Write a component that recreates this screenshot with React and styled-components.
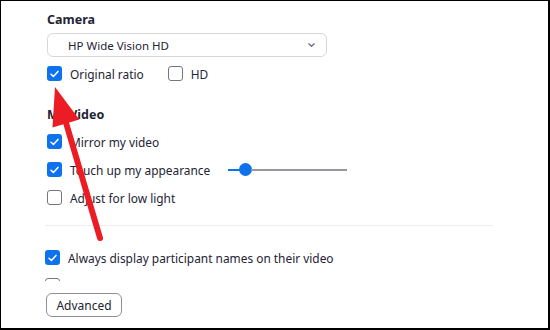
import React from 'react'
import styled, { createGlobalStyle } from 'styled-components'

const Global = createGlobalStyle`
  html, body { margin: 0; padding: 0; background: #fff; }
  body { font-family: "Noto Sans", "Open Sans", sans-serif; }
`

const Frame = styled.div`
  position: relative;
  box-sizing: border-box;
  width: 550px;
  height: 330px;
  border-style: solid;
  border-color: #000;
  border-width: 1px 2px 2px 1px;
  background: #fff;
  overflow: hidden;
`

const Scroll = styled.div`
  height: 280px;
  overflow: hidden;
  padding: 10px 0 0 46px;
  box-sizing: border-box;
`

const Heading = styled.div`
  font-size: 12.5px;
  line-height: 18px;
  font-weight: 700;
  color: #232333;
  margin-top: ${p => p.$top || 0}px;
`

const Select = styled.div`
  box-sizing: border-box;
  width: 280px;
  height: 24px;
  margin-top: 4px;
  border: 1px solid #d6d6dc;
  border-radius: 6px;
  display: flex;
  align-items: center;
  justify-content: space-between;
  padding: 0 10px 0 20px;
  font-size: 11.5px;
  color: #232333;
`

const Row = styled.div`
  display: flex;
  align-items: center;
  gap: ${p => p.$gap || 21}px;
  margin-top: ${p => p.$top || 0}px;
  margin-left: ${p => p.$left || 0}px;
  height: 20px;
`

const OptionLabel = styled.label`
  display: flex;
  align-items: center;
  gap: 8px;
  font-size: 11.9px;
  color: #232333;
  white-space: nowrap;
`

const Box = styled.span`
  box-sizing: border-box;
  width: 15px;
  height: 15px;
  border-radius: 3px;
  flex: none;
  display: flex;
  align-items: center;
  justify-content: center;
  background: ${p => (p.$on ? '#0e72ed' : '#fff')};
  border: ${p => (p.$on ? 'none' : '1px solid #747487')};
`

const Divider = styled.div`
  width: 448px;
  height: 1px;
  background: #ededf0;
  margin: 17px 0 0 -2px;
`

const Slider = styled.div`
  display: flex;
  align-items: center;
  height: 14px;
`

const Track = styled.div`
  height: 2px;
  background: ${p => p.$color};
  width: ${p => p.$w}px;
`

const Thumb = styled.div`
  width: 13px;
  height: 13px;
  border-radius: 50%;
  background: #0e72ed;
  margin: 0 -1px;
  flex: none;
`

const Footer = styled.div`
  padding: 12px 0 0 45px;
`

const Button = styled.div`
  box-sizing: border-box;
  width: 76px;
  height: 24px;
  border: 1px solid #8f8f9a;
  border-radius: 6px;
  display: flex;
  align-items: center;
  justify-content: center;
  font-size: 12px;
  color: #232333;
`

const ArrowLayer = styled.svg`
  position: absolute;
  left: -1px;
  top: -1px;
  pointer-events: none;
`

const Tick = () => (
  <svg width="9" height="8" viewBox="0 0 9 8">
    <path d="M1 4.2 L3.4 6.4 L8 1.4" fill="none" stroke="#fff" strokeWidth="1.5" strokeLinecap="round" strokeLinejoin="round" />
  </svg>
)

const Check = ({ on, children }) => (
  <OptionLabel>
    <Box $on={on}>{on && <Tick />}</Box>
    {children}
  </OptionLabel>
)

export default function App() {
  return (
    <>
      <Global />
      <Frame>
        <Scroll>
          <Heading>Camera</Heading>
          <Select>
            <span>HP Wide Vision HD</span>
            <svg width="9" height="6" viewBox="0 0 9 6">
              <path d="M1.5 1.5 L4.5 4.3 L7.5 1.5" fill="none" stroke="#6e6e7e" strokeWidth="1.3" />
            </svg>
          </Select>
          <Row $top={6.5} $gap={24}>
            <Check on>Original ratio</Check>
            <Check>HD</Check>
          </Row>
          <Heading $top={22}>My Video</Heading>
          <Row $top={8}>
            <Check on>Mirror my video</Check>
          </Row>
          <Row $top={8} $gap={18}>
            <Check on>Touch up my appearance</Check>
            <Slider>
              <Track $color="#0e72ed" $w={12} />
              <Thumb />
              <Track $color="#98979f" $w={96} />
            </Slider>
          </Row>
          <Row $top={8}>
            <Check>Adjust for low light</Check>
          </Row>
          <Divider />
          <Row $top={22} $left={-2}>
            <Check on>Always display participant names on their video</Check>
          </Row>
          <Row $top={8} $left={-2}>
            <Check />
          </Row>
        </Scroll>
        <Footer>
          <Button>Advanced</Button>
        </Footer>
        <ArrowLayer width="550" height="330" viewBox="0 0 550 330">
          <line x1="100" y1="238" x2="64" y2="116" stroke="#ec1c24" strokeWidth="6" strokeLinecap="round" />
          <polygon points="55,87 79.3,119.4 52.5,127.4" fill="#ec1c24" />
        </ArrowLayer>
      </Frame>
    </>
  )
}
